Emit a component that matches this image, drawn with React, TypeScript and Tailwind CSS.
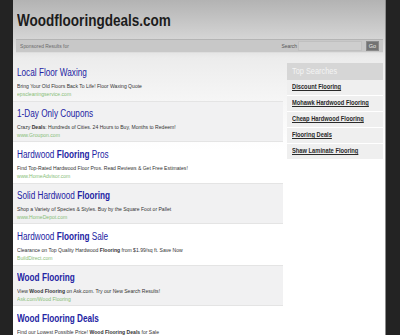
import React from 'react';

type Ad = {
  title: React.ReactNode;
  desc: React.ReactNode;
  url: string;
};

const ads: Ad[] = [
  {
    title: 'Local Floor Waxing',
    desc: 'Bring Your Old Floors Back To Life! Floor Waxing Quote',
    url: 'epscleaningservice.com',
  },
  {
    title: '1-Day Only Coupons',
    desc: (
      <>
        Crazy <b>Deals</b>: Hundreds of Cities. 24 Hours to Buy, Months to Redeem!
      </>
    ),
    url: 'www.Groupon.com',
  },
  {
    title: (
      <>
        Hardwood <b>Flooring</b> Pros
      </>
    ),
    desc: 'Find Top-Rated Hardwood Floor Pros. Read Reviews & Get Free Estimates!',
    url: 'www.HomeAdvisor.com',
  },
  {
    title: (
      <>
        Solid Hardwood <b>Flooring</b>
      </>
    ),
    desc: 'Shop a Variety of Species & Styles. Buy by the Square Foot or Pallet',
    url: 'www.HomeDepot.com',
  },
  {
    title: (
      <>
        Hardwood <b>Flooring</b> Sale
      </>
    ),
    desc: (
      <>
        Clearance on Top Quality Hardwood <b>Flooring</b> from $1.99/sq ft. Save Now
      </>
    ),
    url: 'BuildDirect.com',
  },
  {
    title: <b>Wood Flooring</b>,
    desc: (
      <>
        View <b>Wood Flooring</b> on Ask.com. Try our New Search Results!
      </>
    ),
    url: 'Ask.com/Wood Flooring',
  },
  {
    title: <b>Wood Flooring Deals</b>,
    desc: (
      <>
        Find our Lowest Possible Price! <b>Wood Flooring Deals</b> for Sale
      </>
    ),
    url: 'www.Overstock.com',
  },
];

const topSearches = [
  'Discount Flooring',
  'Mohawk Hardwood Flooring',
  'Cheap Hardwood Flooring',
  'Flooring Deals',
  'Shaw Laminate Flooring',
];

// the page is narrower than it is tall in the shot, squeeze text horizontally
const squeeze = 'origin-left scale-x-[0.82]';

export default function App() {
  return (
    <div className="flex w-[400px] h-[335px] overflow-hidden bg-[#232323] font-['Liberation_Sans',Arial,sans-serif]">
      <div className="w-[13px] shrink-0 bg-[#232323]" />

      <div className="w-[372px] shrink-0 flex flex-col bg-[linear-gradient(to_bottom,#b3b3b3_0px,#d4d4d4_38px,#ececec_58px,#f8f8f8_110px,#ffffff_150px)]">
        {/* header */}
        <div className="h-[39px] shrink-0 pl-[4px] pt-[10px]">
          <h1 className={`text-[16.5px] leading-[20px] font-bold text-[#1c1c1c] ${squeeze}`}>
            Woodflooringdeals.com
          </h1>
        </div>

        {/* sponsored bar */}
        <div className="ml-[3px] mr-[2px] h-[14px] shrink-0 flex items-center bg-[#c8c8c8] border-t border-[#b4b4b4] border-b border-b-[#dedede]">
          <span className={`inline-block pl-[5px] text-[6px] text-[#6a6a6a] ${squeeze}`}>Sponsored Results for</span>
          <div className="ml-auto flex items-center">
            <span className="inline-block text-[6px] text-[#555] origin-right scale-x-[0.82]">Search</span>
            <div className="ml-[1px] w-[64px] h-[10px] bg-[#cecece] border border-[#c0c0c0]" />
            <div className="ml-[4px] mr-[4px] w-[13px] h-[10px] flex items-center justify-center bg-[#737373] border border-[#8a8a8a] text-[5.5px] text-[#e8e8e8]">
              Go
            </div>
          </div>
        </div>

        {/* body */}
        <div className="flex shrink-0 mt-[7px]">
          <div className="w-[270px] shrink-0 flex flex-col">
            {ads.map((ad, i) => (
              <div
                key={i}
                className={
                  'h-[41px] shrink-0 pl-[4px] pt-[7px] ' +
                  (i % 2 === 1 ? 'bg-[#f1f1f2] border-y border-[#e4e4e4]' : 'border-y border-transparent')
                }
              >
                <div className={`w-[320px] ${squeeze}`}>
                  <div className="text-[10px] leading-[10px] text-[#2323a3]">{ad.title}</div>
                  <div className="mt-[4px] text-[6.2px] leading-[7px] text-[#333]">{ad.desc}</div>
                  <div className="mt-[1px] text-[6.2px] leading-[7px] text-[#86bd76]">{ad.url}</div>
                </div>
              </div>
            ))}
          </div>

          <div className="ml-[4px] mt-[3px] w-[96px] self-start flex flex-col">
            <div className="h-[17px] pl-[5px] flex items-center bg-[#d6d6d6]">
              <span className={`block text-[9px] text-[#f4f4f4] ${squeeze}`}>Top Searches</span>
            </div>
            {topSearches.map((s) => (
              <div
                key={s}
                className="h-[16px] pl-[5px] flex items-center bg-[#efefef] border-b border-white"
              >
                <span className={`block whitespace-nowrap text-[7px] font-bold text-[#2a2a2a] underline ${squeeze}`}>
                  {s}
                </span>
              </div>
            ))}
          </div>
        </div>
      </div>

      <div className="w-[15px] shrink-0 bg-[#232323] border-l border-[#8c8c8c]" />
    </div>
  );
}
